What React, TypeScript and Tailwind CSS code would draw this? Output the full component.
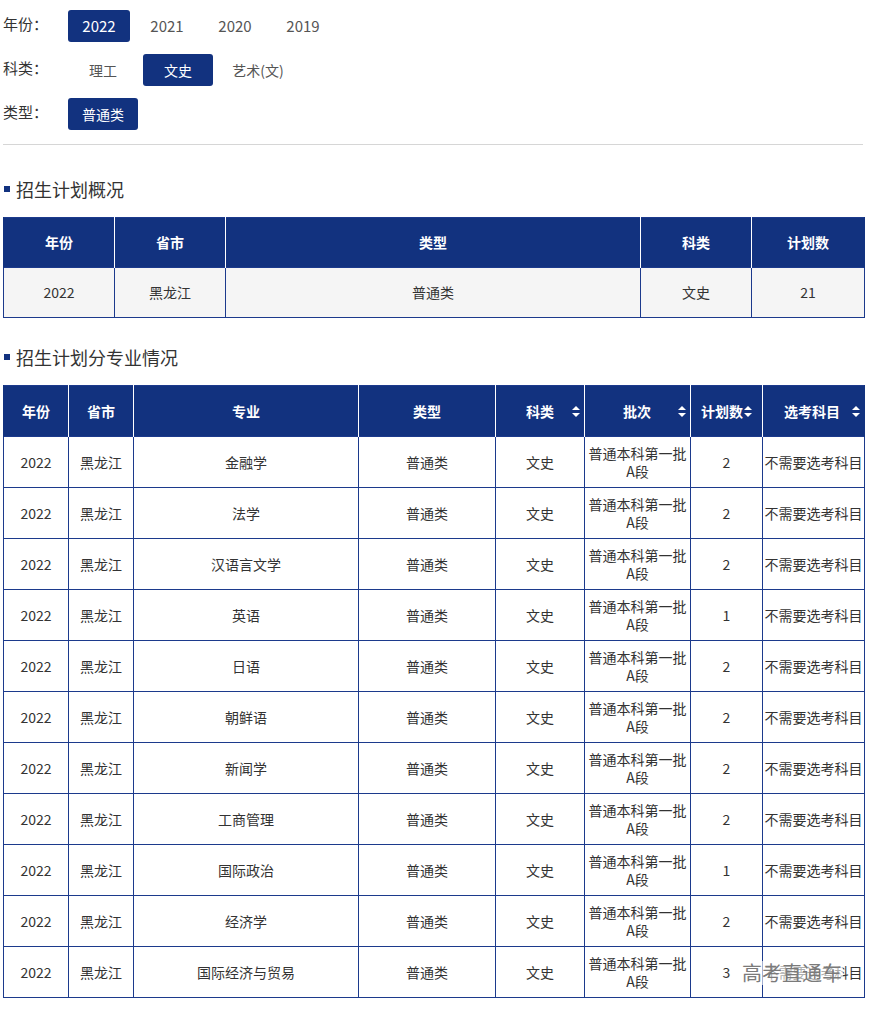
import React from "react";

const FONT = { fontFamily: '"Microsoft YaHei", "Noto Sans CJK SC", "Noto Sans", sans-serif' };

function SortIcon() {
  return (
    <svg width="8" height="11" viewBox="0 0 8 11" className="shrink-0">
      <path d="M4 0 L8 4 L0 4 Z" fill="#fff" />
      <path d="M4 11 L8 7 L0 7 Z" fill="#fff" />
    </svg>
  );
}

const majors = [
  ["金融学", "2"],
  ["法学", "2"],
  ["汉语言文学", "2"],
  ["英语", "1"],
  ["日语", "2"],
  ["朝鲜语", "2"],
  ["新闻学", "2"],
  ["工商管理", "2"],
  ["国际政治", "1"],
  ["经济学", "2"],
  ["国际经济与贸易", "3"],
];

function Heading({ children }: { children: React.ReactNode }) {
  return (
    <div className="flex items-center h-[24px] text-[18px] text-[#333]">
      <span className="w-[6px] h-[6px] bg-[#12327f] ml-[1px] mr-[6px]" />
      <span>{children}</span>
    </div>
  );
}

export default function App() {
  const thBase = "border-x border-white first:border-l-[#12327f] last:border-r-[#12327f] bg-[#12327f] text-white font-bold text-[14px] p-0";
  const tdBase = "border border-[#1c3a8c] text-[14px] text-[#333] text-center p-0 font-normal";
  const th1 = thBase + " h-[50px]";
  const td1 = tdBase + " h-[50px]";
  const th = thBase + " h-[51px]";
  const td = tdBase + " h-[51px]";
  return (
    <div className="bg-white w-[876px] min-h-[1012px] pl-[3px] pt-[10px]" style={FONT}>
      <div className="w-[861px]">
        {/* filters */}
        <div className="flex flex-col gap-[12px]">
          <div className="flex items-start">
            <div className="w-[65px] text-[15px] text-[#333] leading-[28px]">年份：</div>
            <div className="flex gap-[6px]">
              <div className="w-[62px] h-[32px] rounded-[3px] bg-[#12327f] text-white text-[15px] flex items-center justify-center">2022</div>
              <div className="w-[62px] h-[32px] text-[#555] text-[15px] flex items-center justify-center">2021</div>
              <div className="w-[62px] h-[32px] text-[#555] text-[15px] flex items-center justify-center">2020</div>
              <div className="w-[62px] h-[32px] text-[#555] text-[15px] flex items-center justify-center">2019</div>
            </div>
          </div>
          <div className="flex items-start">
            <div className="w-[65px] text-[15px] text-[#333] leading-[28px]">科类：</div>
            <div className="flex gap-[5px]">
              <div className="w-[70px] h-[32px] text-[#555] text-[14px] flex items-center justify-center">理工</div>
              <div className="w-[70px] h-[32px] rounded-[3px] bg-[#12327f] text-white text-[14px] flex items-center justify-center">文史</div>
              <div className="w-[80px] h-[32px] text-[#555] text-[14px] flex items-center justify-center">艺术(文)</div>
            </div>
          </div>
          <div className="flex items-start">
            <div className="w-[65px] text-[15px] text-[#333] leading-[28px]">类型：</div>
            <div className="w-[70px] h-[32px] rounded-[3px] bg-[#12327f] text-white text-[14px] flex items-center justify-center">普通类</div>
          </div>
        </div>

        <div className="h-px bg-[#d6d6d6] mt-[14px] w-[860px]" />

        <div className="mt-[32px]">
          <Heading>招生计划概况</Heading>
        </div>

        <table className="mt-[16px] w-[861px] border-collapse table-fixed border border-[#1c3a8c]">
          <colgroup>
            <col className="w-[111px]" />
            <col className="w-[111px]" />
            <col className="w-[415px]" />
            <col className="w-[111px]" />
            <col className="w-[113px]" />
          </colgroup>
          <thead>
            <tr>
              <th className={th1}>年份</th>
              <th className={th1}>省市</th>
              <th className={th1}>类型</th>
              <th className={th1}>科类</th>
              <th className={th1}>计划数</th>
            </tr>
          </thead>
          <tbody>
            <tr className="bg-[#f5f5f5]">
              <td className={td1}>2022</td>
              <td className={td1}>黑龙江</td>
              <td className={td1}>普通类</td>
              <td className={td1}>文史</td>
              <td className={td1}>21</td>
            </tr>
          </tbody>
        </table>

        <div className="mt-[27px]">
          <Heading>招生计划分专业情况</Heading>
        </div>

        <div className="relative mt-[16px]">
          <table className="w-[861px] border-collapse table-fixed border border-[#1c3a8c]">
            <colgroup>
              <col className="w-[65px]" />
              <col className="w-[65px]" />
              <col className="w-[225px]" />
              <col className="w-[137px]" />
              <col className="w-[89px]" />
              <col className="w-[106px]" />
              <col className="w-[72px]" />
              <col className="w-[102px]" />
            </colgroup>
            <thead>
              <tr>
                <th className={th}>年份</th>
                <th className={th}>省市</th>
                <th className={th}>专业</th>
                <th className={th}>类型</th>
                <th className={th}>
                  <div className="flex items-center justify-between pl-[30px] pr-[4px]">
                    <span>科类</span>
                    <SortIcon />
                  </div>
                </th>
                <th className={th}>
                  <div className="flex items-center justify-between pl-[38px] pr-[4px]">
                    <span>批次</span>
                    <SortIcon />
                  </div>
                </th>
                <th className={th}>
                  <div className="flex items-center justify-center gap-[1px]">
                    <span>计划数</span>
                    <SortIcon />
                  </div>
                </th>
                <th className={th}>
                  <div className="flex items-center justify-between pl-[21px] pr-[4px]">
                    <span>选考科目</span>
                    <SortIcon />
                  </div>
                </th>
              </tr>
            </thead>
            <tbody>
              {majors.map(([m, n], i) => (
                <tr key={i} className="bg-white">
                  <td className={td}>2022</td>
                  <td className={td}>黑龙江</td>
                  <td className={td}>{m}</td>
                  <td className={td}>普通类</td>
                  <td className={td}>文史</td>
                  <td className={td + " leading-[18px]"}>
                    普通本科第一批
                    <br />
                    A段
                  </td>
                  <td className={td}>{n}</td>
                  <td className={td + " whitespace-nowrap overflow-hidden"}>不需要选考科目</td>
                </tr>
              ))}
            </tbody>
          </table>
          <div className="absolute left-[738px] bottom-[13px] text-[20px] leading-[24px] text-[#7a7a7a] bg-white/60 px-[1px]">
            高考直通车
          </div>
        </div>
      </div>
    </div>
  );
}
